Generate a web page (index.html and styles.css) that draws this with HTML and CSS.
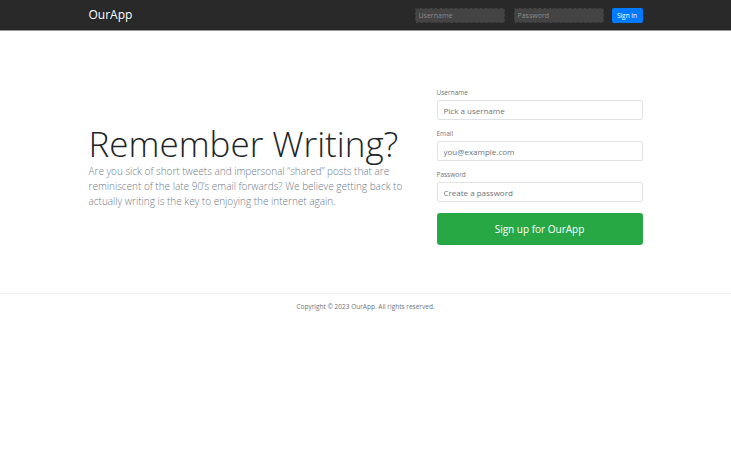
FILE: index.html
```html
<!DOCTYPE html>
<html lang="en">
<head>
<meta charset="utf-8">
<title>OurApp</title>
<link rel="stylesheet" href="styles.css">
</head>
<body>
<header class="header">
  <div class="container header-inner">
    <a class="brand" href="#">OurApp</a>
    <form class="login">
      <input class="login-input" type="text" placeholder="Username">
      <input class="login-input" type="password" placeholder="Password">
      <button class="login-btn" type="button">Sign In</button>
    </form>
  </div>
</header>
<main class="main">
  <div class="container row">
    <div class="intro">
      <h1 class="title">Remember Writing?</h1>
      <p class="lead">Are you sick of short tweets and impersonal “shared” posts that are reminiscent of the late 90’s email forwards? We believe getting back to actually writing is the key to enjoying the internet again.</p>
    </div>
    <form class="signup">
      <div class="field">
        <label class="label">Username</label>
        <input class="input" type="text" placeholder="Pick a username">
      </div>
      <div class="field">
        <label class="label">Email</label>
        <input class="input" type="text" placeholder="you@example.com">
      </div>
      <div class="field">
        <label class="label">Password</label>
        <input class="input" type="password" placeholder="Create a password">
      </div>
      <button class="signup-btn" type="button">Sign up for OurApp</button>
    </form>
  </div>
</main>
<footer class="footer">
  <p class="copy">Copyright © 2023 OurApp. All rights reserved.</p>
</footer>
</body>
</html>
```
FILE: styles.css
```css
* { box-sizing: border-box; }
body {
  margin: 0;
  font-family: "Open Sans", "Liberation Sans", sans-serif;
  color: #212529;
  background: #fff;
}
.container {
  width: 554px;
  margin: 0 auto;
}
.header {
  background: #292929;
  height: 31px;
  border-bottom: 1px solid #9a9a9a;
}
.header-inner {
  display: flex;
  align-items: center;
  justify-content: space-between;
  height: 30px;
}
.brand {
  color: #fff;
  font-size: 12px;
  text-decoration: none;
  line-height: 1;
}
.login {
  display: flex;
  align-items: center;
  gap: 9px;
}
.login-input {
  width: 90px;
  height: 15px;
  background: #444;
  border: 1px dashed #333;
  border-radius: 2px;
  padding: 0 3px;
  font-family: inherit;
  font-size: 7px;
  color: #ccc;
}
.login-input::placeholder { color: #8a8a8a; }
.login-btn {
  width: 31px;
  height: 15px;
  margin-left: -1px;
  background: #007bff;
  border: 0;
  border-radius: 2px;
  color: #fff;
  font-family: inherit;
  font-size: 6.5px;
  padding: 0;
}
.main {
  padding: 58px 0 48px;
  border-bottom: 1px solid #f2f2f2;
}
.row {
  display: flex;
  align-items: center;
  justify-content: space-between;
}
.intro {
  width: 320px;
}
.title {
  margin: 0 0 1px;
  font-weight: 300;
  font-size: 35px;
  line-height: 1.1;
  color: #212529;
  white-space: nowrap;
}
.lead {
  margin: 0;
  font-weight: 300;
  font-size: 10px;
  line-height: 15px;
  color: #6c7a89;
}
.signup {
  width: 206px;
}
.field {
  margin-bottom: 10px;
}
.label {
  display: block;
  font-size: 6.5px;
  color: #6c757d;
  margin-bottom: 3px;
  line-height: 8px;
}
.input {
  display: block;
  width: 100%;
  height: 20px;
  border: 1px solid #e0e3e6;
  border-radius: 2px;
  padding: 0 6px;
  font-family: inherit;
  font-size: 8px;
  color: #495057;
}
.input::placeholder { color: #6c757d; }
.signup-btn {
  display: block;
  width: 100%;
  height: 32px;
  margin-top: 11px;
  background: #28a745;
  border: 0;
  border-radius: 3px;
  color: #fff;
  font-family: inherit;
  font-size: 10px;
}
.footer {
  padding: 8px 0;
  text-align: center;
}
.copy {
  margin: 0;
  font-size: 6.5px;
  color: #6c757d;
}
```
